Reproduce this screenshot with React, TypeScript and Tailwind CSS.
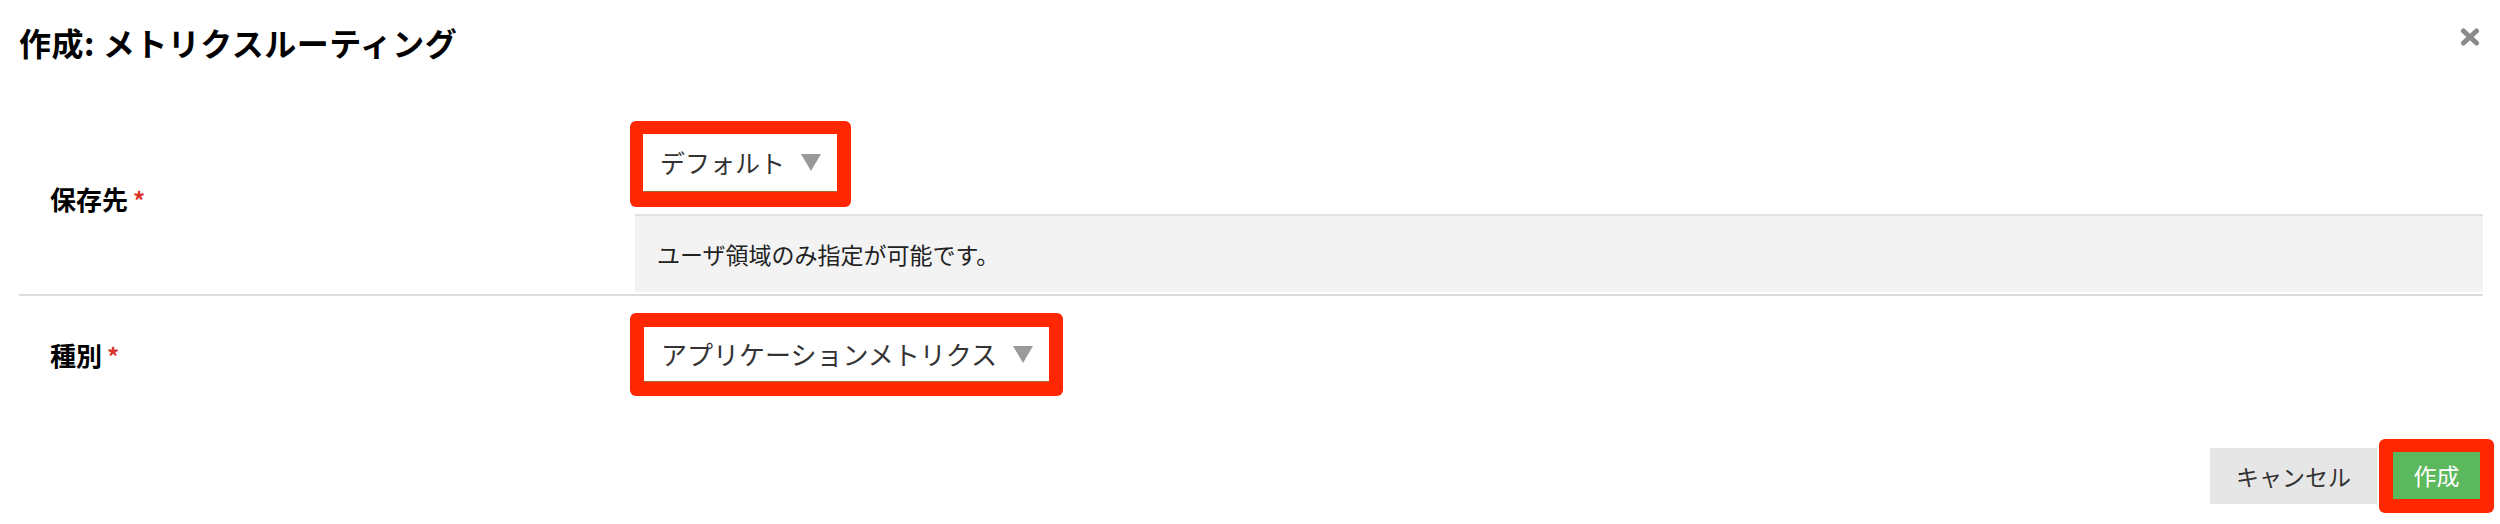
import React from "react";

// 作成ダイアログ: メトリクスルーティング

function Caret() {
  return (
    <svg width="20" height="17" viewBox="0 0 20 17" className="shrink-0">
      <polygon points="0,0 20,0 10,17" fill="#9a9a9a" />
    </svg>
  );
}

function CloseIcon() {
  return (
    <svg width="20" height="18" viewBox="0 0 20 18">
      <path d="M3.5 3 L16.5 15 M16.5 3 L3.5 15" stroke="#8a8a8a" strokeWidth="5" strokeLinecap="round" />
    </svg>
  );
}

function Highlight({ children, className = "" }: { children: React.ReactNode; className?: string }) {
  return <div className={`bg-[#ff2700] rounded-[6px] ${className}`}>{children}</div>;
}

function SelectBox({ label, className = "" }: { label: string; className?: string }) {
  return (
    <div className={`bg-white flex items-center pl-[17px] pr-[16px] gap-[16px] border-b border-[#a06a2a] ${className}`}>
      <span className="leading-none text-[#333] whitespace-nowrap">{label}</span>
      <Caret />
    </div>
  );
}

function Required() {
  return <span className="text-[#d9342b] text-[24px] font-bold leading-none ml-[5px] mt-[2px] self-start">*</span>;
}

export default function App() {
  return (
    <div className="w-full h-[524px] bg-white font-['Noto_Sans_CJK_JP','Noto_Sans',sans-serif] text-black overflow-hidden">
      {/* --- Header --- */}
      <div className="h-[82px] flex items-center justify-between pl-[19px] pr-[20px]">
        <h1 className="text-[32px] font-bold leading-none tracking-[0.5px] mt-[1px]">作成: メトリクスルーティング</h1>
        <button className="-mt-[9px]">
          <CloseIcon />
        </button>
      </div>

      <div className="pl-[19px] pr-[17px]">
        {/* --- 保存先 --- */}
        <div className="flex h-[214px] border-b-2 border-[#dddddd]">
          <div className="w-[611px] pl-[31px] pt-[104px] flex">
            <span className="text-[26px] font-bold leading-none">保存先</span>
            <Required />
          </div>
          <div className="flex-1 flex flex-col pt-[39px]">
            <Highlight className="self-start pt-[13px] pb-[15px] pl-[13px] pr-[14px]">
              <SelectBox label="デフォルト" className="h-[58px] text-[25px]" />
            </Highlight>
            <div className="ml-[5px] mt-[7px] h-[78px] bg-[#f3f3f3] border-t-2 border-[#e2e2e2] flex items-center pl-[22px]">
              <span className="text-[23px] leading-none text-[#222]">ユーザ領域のみ指定が可能です。</span>
            </div>
          </div>
        </div>

        {/* --- 種別 --- */}
        <div className="flex items-center pt-[17px]">
          <div className="w-[611px] pl-[31px] flex">
            <span className="text-[26px] font-bold leading-none">種別</span>
            <Required />
          </div>
          <Highlight className="p-[14px]">
            <SelectBox label="アプリケーションメトリクス" className="h-[55px] text-[26px]" />
          </Highlight>
        </div>
      </div>

      {/* --- Footer --- */}
      <div className="flex justify-end items-center pr-[6px] mt-[43px]">
        <button className="w-[167px] h-[56px] bg-[#e6e6e6] text-[#333] text-[23px] leading-none">キャンセル</button>
        <Highlight className="ml-[2px] pt-[13px] pb-[14px] pl-[14px] pr-[14px]">
          <div className="w-[87px] h-[47px] bg-[#5cb85c] text-white text-[23px] leading-none flex items-center justify-center">
            作成
          </div>
        </Highlight>
      </div>
    </div>
  );
}
